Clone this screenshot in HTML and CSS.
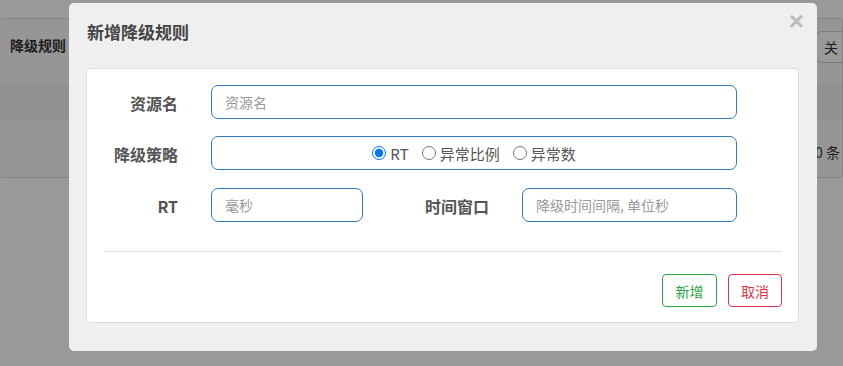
FILE: index.html
```html
<!DOCTYPE html>
<html lang="zh-CN">
<head>
    <meta charset="UTF-8">
    <title>降级规则</title>
    <link rel="stylesheet" href="styles.css">
</head>
<body>
    <div class="page">
        <div class="rule-card">
            <div class="rule-head">
                <span class="rule-title">降级规则</span>
                <button class="btn-close-all">关</button>
            </div>
            <div class="table-head"></div>
            <div class="table-foot">
                <span class="total">0 条</span>
            </div>
        </div>
    </div>

    <div class="backdrop"></div>

    <div class="modal">
        <div class="modal-header">
            <h4 class="modal-title">新增降级规则</h4>
            <span class="modal-close">&times;</span>
        </div>
        <div class="modal-body">
            <div class="form-row">
                <label class="form-label">资源名</label>
                <input class="form-input" type="text" placeholder="资源名">
            </div>
            <div class="form-row">
                <label class="form-label">降级策略</label>
                <div class="form-input radio-group">
                    <label class="radio"><input type="radio" name="grade" checked>RT</label>
                    <label class="radio"><input type="radio" name="grade">异常比例</label>
                    <label class="radio"><input type="radio" name="grade">异常数</label>
                </div>
            </div>
            <div class="form-row">
                <label class="form-label">RT</label>
                <input class="form-input input-short" type="text" placeholder="毫秒">
                <label class="form-label label-wide">时间窗口</label>
                <input class="form-input input-mid" type="text" placeholder="降级时间间隔, 单位秒">
            </div>
            <hr class="divider">
            <div class="modal-actions">
                <button class="btn btn-add">新增</button>
                <button class="btn btn-cancel">取消</button>
            </div>
        </div>
    </div>
</body>
</html>
```

FILE: styles.css
```css
body {
    margin: 0;
    font-family: "Noto Sans CJK SC", "Liberation Sans", sans-serif;
    background: #fff;
    width: 843px;
    height: 366px;
    overflow: hidden;
    position: relative;
}

.page {
    padding-top: 18px;
}

.rule-card {
    border: 1px solid #ddd;
    border-left: none;
    border-radius: 4px;
    height: 158px;
    background: #fbfbfb;
}

.rule-head {
    height: 66px;
    box-sizing: border-box;
    display: flex;
    align-items: flex-start;
    justify-content: space-between;
    padding: 12px 0 0 10px;
    border-bottom: 1px solid #eee;
}

.rule-title {
    font-size: 14px;
    font-weight: bold;
    color: #333;
    margin-top: 4px;
}

.btn-close-all {
    font-family: inherit;
    font-size: 14px;
    color: #333;
    background: #fff;
    border: 1px solid #ccc;
    border-radius: 6px;
    height: 32px;
    width: 26px;
    padding: 0 0 0 7px;
    text-align: left;
    border-right: none;
    border-top-right-radius: 0;
    border-bottom-right-radius: 0;
}

.table-head {
    height: 35px;
    background: #f2f2f2;
}

.table-foot {
    display: flex;
    justify-content: flex-end;
    padding-top: 22px;
}

.total {
    font-size: 14px;
    color: #333;
    margin-right: 2px;
}

.backdrop {
    position: absolute;
    left: 0;
    top: 0;
    right: 0;
    bottom: 0;
    background: rgba(0, 0, 0, 0.4);
}

.modal {
    position: absolute;
    left: 69px;
    top: 3px;
    width: 748px;
    height: 348px;
    box-sizing: border-box;
    background: #efefef;
    border-radius: 5px;
    padding: 0 18px 0 17px;
}

.modal-header {
    height: 65px;
    display: flex;
    align-items: center;
    justify-content: space-between;
}

.modal-title {
    margin: 0 0 0 1px;
    font-size: 17px;
    font-weight: bold;
    color: #444;
    position: relative;
    top: -4px;
}

.modal-close {
    font-size: 26px;
    font-weight: bold;
    color: #bbb;
    font-family: "Liberation Sans", sans-serif;
    line-height: 1;
    position: relative;
    top: -15px;
    right: -5px;
}

.modal-body {
    background: #fff;
    border: 1px solid #ddd;
    border-radius: 4px;
    height: 255px;
    box-sizing: border-box;
    padding: 16px 16px 0 0;
}

.form-row {
    display: flex;
    align-items: center;
    margin-bottom: 17px;
}

.form-row:nth-child(2) {
    margin-bottom: 18px;
}

.form-label {
    width: 91px;
    flex: none;
    text-align: right;
    font-size: 16px;
    font-weight: bold;
    color: #555;
    margin-right: 33px;
    padding-top: 2px;
}

.label-wide {
    width: 126px;
}

.form-input {
    width: 526px;
    height: 34px;
    box-sizing: border-box;
    border: 1px solid #337ab7;
    border-radius: 7px;
    padding: 0 13px;
    font-family: inherit;
    font-size: 14px;
    color: #555;
    outline: none;
}

.form-input::placeholder {
    color: #999;
}

.input-short {
    width: 152px;
}

.input-mid {
    width: 215px;
}

.radio-group {
    display: flex;
    align-items: center;
    justify-content: center;
    gap: 13px;
}

.radio {
    display: flex;
    align-items: center;
    font-size: 15px;
    color: #555;
}

.radio input {
    margin: 0 4px 0 0;
    width: 14px;
    height: 14px;
}

.divider {
    border: none;
    border-top: 1px solid #ddd;
    margin: 29px 0 22px 17px;
}

.modal-actions {
    display: flex;
    justify-content: flex-end;
    gap: 11px;
}

.btn {
    font-family: inherit;
    font-size: 14px;
    background: #fff;
    border-radius: 4px;
    height: 33px;
    width: 55px;
    padding: 0;
}

.btn-add {
    color: #28a745;
    border: 1px solid #28a745;
}

.btn-cancel {
    color: #dc3545;
    border: 1px solid #dc3545;
    width: 54px;
}
```
